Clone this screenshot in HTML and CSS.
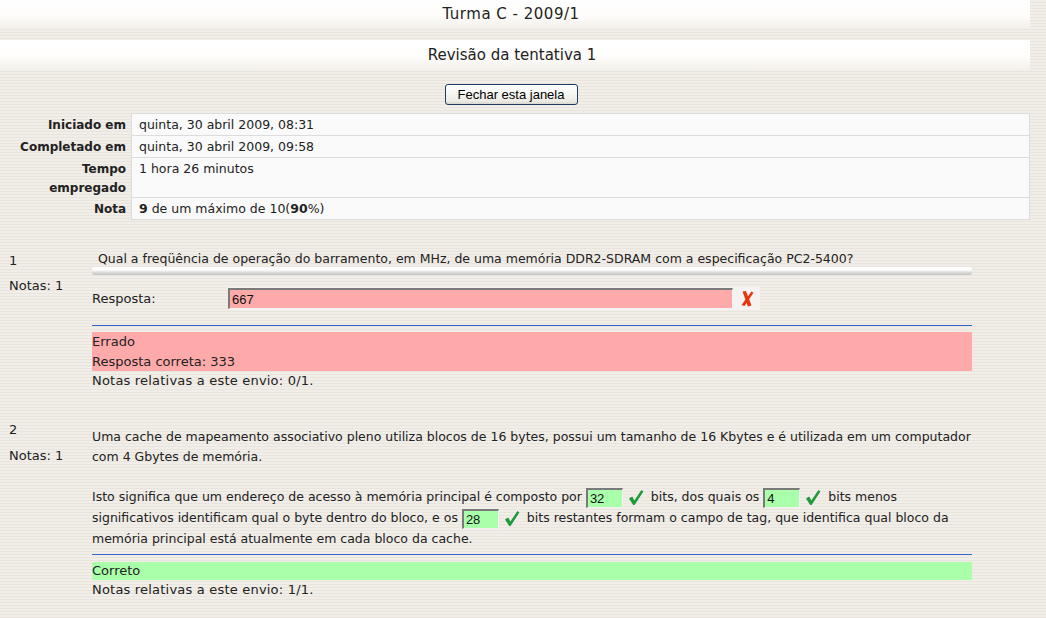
FILE: index.html
```html
<!DOCTYPE html>
<html lang="pt">
<head>
<meta charset="utf-8">
<title>Revisão da tentativa 1</title>
<link rel="stylesheet" href="styles.css">
</head>
<body>
<div class="page">
  <div class="hdr hdr1"><h2 class="hdr-title">Turma C - 2009/1</h2></div>
  <div class="hdr hdr2"><h3 class="hdr-title">Revisão da tentativa 1</h3></div>
  <div class="btnrow"><button class="xpbtn" type="button">Fechar esta janela</button></div>

  <table class="summary">
    <tr><th>Iniciado em</th><td>quinta, 30 abril 2009, 08:31</td></tr>
    <tr><th>Completado em</th><td>quinta, 30 abril 2009, 09:58</td></tr>
    <tr><th>Tempo empregado</th><td>1 hora 26 minutos</td></tr>
    <tr><th>Nota</th><td><b>9</b> de um máximo de 10(<b>90</b>%)</td></tr>
  </table>

  <div class="que q1">
    <div class="info">
      <div class="no">1</div>
      <div class="grade">Notas: 1</div>
    </div>
    <div class="content">
      <div class="qtext">Qual a freqüência de operação do barramento, em MHz, de uma memória DDR2-SDRAM com a especificação PC2-5400?</div>
      <div class="qbar"></div>
      <div class="ablock">
        <span class="prompt">Resposta:</span>
        <span class="answer">
          <input class="field wrong wide" type="text" value="667" readonly>
          <svg class="icon-x" viewBox="0 0 14 17" width="14" height="17"><polygon points="2.5,1.5 6,1 11.5,15.5 8,16.5" fill="#e8350e"/><polygon points="11.5,1.5 13.5,2.8 4.5,16 1.5,15" fill="#e8350e"/></svg>
        </span>
      </div>
      <div class="sep"></div>
      <div class="feedback incorrect">Errado<br>Resposta correta: 333</div>
      <div class="grading">Notas relativas a este envio: 0/1.</div>
    </div>
  </div>

  <div class="que q2">
    <div class="info">
      <div class="no">2</div>
      <div class="grade">Notas: 1</div>
    </div>
    <div class="content">
      <p class="p1">Uma cache de mapeamento associativo pleno utiliza blocos de 16 bytes, possui um tamanho de 16 Kbytes e é utilizada em um computador com 4 Gbytes de memória.</p>
      <p class="p2">Isto significa que um endereço de acesso à memória principal é composto por <input class="field right small" type="text" value="32" readonly><svg class="icon-ok" viewBox="0 0 16 17" width="16" height="17"><path d="M1 9.5 L4.2 7.6 L6.4 11.6 L13.4 1 L15.4 2.4 L6.6 16 L5.2 16 Z" fill="#1f9a3b"/></svg> bits, dos quais os <input class="field right small" type="text" value="4" readonly><svg class="icon-ok" viewBox="0 0 16 17" width="16" height="17"><path d="M1 9.5 L4.2 7.6 L6.4 11.6 L13.4 1 L15.4 2.4 L6.6 16 L5.2 16 Z" fill="#1f9a3b"/></svg> bits menos significativos identificam qual o byte dentro do bloco, e os <input class="field right small" type="text" value="28" readonly><svg class="icon-ok" viewBox="0 0 16 17" width="16" height="17"><path d="M1 9.5 L4.2 7.6 L6.4 11.6 L13.4 1 L15.4 2.4 L6.6 16 L5.2 16 Z" fill="#1f9a3b"/></svg> bits restantes formam o campo de tag, que identifica qual bloco da memória principal está atualmente em cada bloco da cache.</p>
      <div class="sep sep2"></div>
      <div class="feedback correct">Correto</div>
      <div class="grading">Notas relativas a este envio: 1/1.</div>
    </div>
  </div>
</div>
</body>
</html>
```

FILE: styles.css
```css
html, body {
  margin: 0;
  padding: 0;
}
body {
  font-family: "DejaVu Sans", Verdana, sans-serif;
  font-size: 13px;
  color: #222;
  background-color: #eeeae3;
  background-image: repeating-linear-gradient(to bottom, #f1ede7 0px, #f1ede7 2px, #e9e5de 2px, #e9e5de 3px);
  height: 618px;
  overflow: hidden;
}
.page {
  width: 1030px;
}
.hdr {
  background: linear-gradient(to bottom, #ffffff 0%, #fefdfb 55%, #f3f0ea 100%);
  text-align: center;
}
.hdr1 {
  height: 28px;
}
.hdr2 {
  height: 30px;
  margin-top: 12px;
}
.hdr-title {
  margin: 0;
  font-size: 15px;
  font-weight: normal;
  color: #222;
}
.hdr1 .hdr-title {
  line-height: 28px;
  letter-spacing: 0.5px;
  padding-right: 8px;
}
.hdr2 .hdr-title {
  line-height: 30px;
  padding-right: 6px;
}
.btnrow {
  margin-top: 14px;
  text-align: center;
  height: 21px;
}
.xpbtn {
  margin: 0 0 0 -8px;
  width: 133px;
  height: 21px;
  padding: 0;
  font-family: "Liberation Sans", Arial, sans-serif;
  font-size: 13px;
  color: #000;
  border: 1px solid #1d3a63;
  border-radius: 3px;
  background: linear-gradient(to bottom, #ffffff 0%, #f7f7f4 40%, #eceae3 85%, #d9d8d0 100%);
}
.summary {
  margin-top: 8px;
  width: 1030px;
  table-layout: fixed;
  border-collapse: collapse;
  font-size: 12.5px;
}
.summary th {
  width: 107px;
  padding: 2px 5px 0 19px;
  text-align: right;
  vertical-align: top;
  font-size: 12px;
  font-weight: bold;
  line-height: 19px;
  color: #222;
}
.summary td {
  padding: 1px 6px 1px 7px;
  line-height: 19px;
  vertical-align: top;
  background: #fafafa;
  border: 1px solid #dcdcdc;
}
.que {
  display: flex;
}
.info {
  width: 92px;
  flex: none;
  padding-left: 9px;
  box-sizing: border-box;
  line-height: 19px;
}
.grade {
  margin-top: 6px;
}
.content {
  width: 880px;
  line-height: 19px;
}
.q1 {
  margin-top: 29px;
}
.q1 .info {
  padding-top: 2px;
}
.qtext {
  padding: 1px 6px 0;
  line-height: 17px;
  font-size: 12.5px;
}
.qbar {
  height: 8px;
  border-radius: 2px;
  background: linear-gradient(to bottom, #ffffff 0%, #ffffff 35%, #d9d9d9 70%, #c4c4c4 100%);
}
.ablock {
  display: flex;
  align-items: center;
  margin-top: 12px;
  height: 23px;
}
.prompt {
  width: 136px;
  flex: none;
}
.answer {
  display: flex;
  align-items: center;
  background: #f4f3f1;
  height: 23px;
  padding-right: 6px;
}
.field {
  box-sizing: border-box;
  height: 21px;
  padding: 0 0 0 2px;
  font-family: "Liberation Sans", Tahoma, sans-serif;
  font-size: 13px;
  color: #111;
  border-style: solid;
  border-width: 2px 1px 1px 2px;
  border-color: #7a7a7a #f2f2f2 #f2f2f2 #7a7a7a;
  outline: none;
}
.wide {
  width: 505px;
}
.wrong {
  background: #ffaaaa;
}
.right {
  background: #aaffaa;
}
.small {
  width: 37px;
  height: 20px;
  vertical-align: middle;
  margin: -2px 0;
}
.icon-x {
  margin-left: 7px;
  display: block;
}
.icon-ok {
  vertical-align: middle;
  margin: -2px 3px -2px 5px;
}
.sep {
  margin-top: 15px;
  height: 1px;
  background: #3366cc;
}
.feedback {
  margin-top: 6px;
  line-height: 19.5px;
}
.incorrect {
  background: #ffaaaa;
}
.correct {
  background: #aaffaa;
  line-height: 18px;
}
.grading {
  line-height: 19px;
  letter-spacing: 0.2px;
}
.q2 {
  margin-top: 30px;
}
.q2 .content {
  padding-top: 7px;
}
.q2 .grade {
  margin-top: 7px;
}
.p1 {
  margin: 0;
  line-height: 20px;
  font-size: 12.5px;
}
.p2 {
  margin: 19px 0 0;
  line-height: 21px;
  font-size: 12.5px;
}
.sep2 {
  margin-top: 5px;
}
.q2 .feedback {
  margin-top: 7px;
}
```
